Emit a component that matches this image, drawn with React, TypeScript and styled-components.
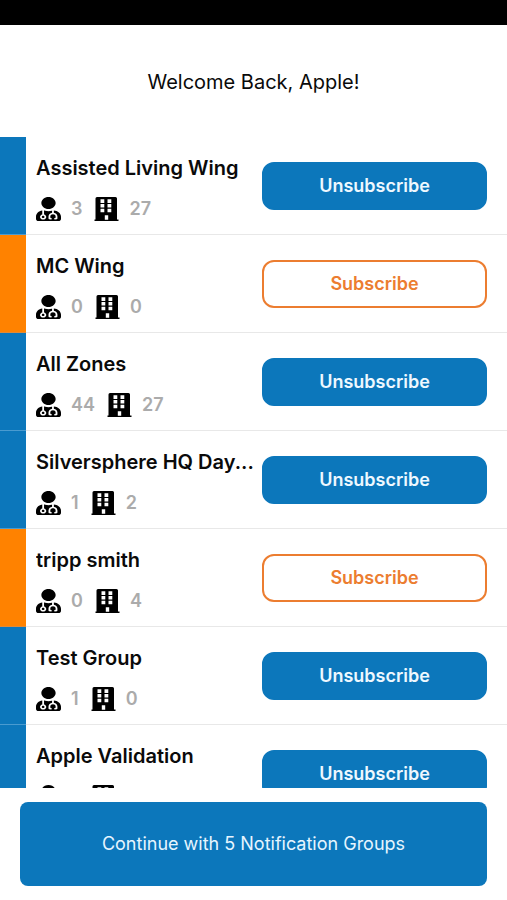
import React, { useState } from "react";
import styled, { createGlobalStyle } from "styled-components";
import { FaUserMd } from "react-icons/fa";

const BLUE = "#0c77bb";
const ORANGE = "#ff8200";
const OUTLINE = "#ec7d30";

const GlobalStyle = createGlobalStyle`
  *, *::before, *::after { box-sizing: border-box; }
  body {
    margin: 0;
    background: #fff;
    color: #0a0a0a;
    font-family: Inter, "Liberation Sans", sans-serif;
  }
  button { font: inherit; cursor: pointer; }
`;

const Screen = styled.div`
  display: flex;
  flex-direction: column;
  height: 100vh;
`;

const StatusBar = styled.div`
  flex: none;
  height: 25px;
  background: #000;
`;

const Header = styled.header`
  flex: none;
  padding: 45px 20px 43px;
  text-align: center;
`;

const Greeting = styled.h1`
  margin: 0;
  font-size: 20px;
  line-height: 24px;
  font-weight: 400;
`;

const GroupList = styled.ul`
  flex: 1;
  min-height: 0;
  margin: 0;
  padding: 0;
  list-style: none;
  overflow-y: auto;
  scrollbar-width: none;
`;

const GroupRow = styled.li`
  display: grid;
  grid-template-columns: 26px minmax(0, 1fr) minmax(0, 225px);
  align-items: center;
  height: 98px;
  padding-right: 20px;
  box-shadow: inset 0 -1px #e8e8e8;
`;

const Stripe = styled.div<{ $subscribed: boolean }>`
  align-self: stretch;
  background: ${(p) => (p.$subscribed ? BLUE : ORANGE)};
  box-shadow: inset 0 -1px ${(p) => (p.$subscribed ? "#4a9bd0" : "#e08a38")};
`;

const Details = styled.div`
  padding: 4px 4px 0 10px;
`;

const GroupName = styled.h2`
  margin: 0 0 16px;
  overflow: hidden;
  font-size: 20px;
  line-height: 26px;
  font-weight: 600;
  white-space: nowrap;
  text-overflow: ellipsis;
`;

const Counts = styled.div`
  display: flex;
  align-items: center;
  gap: 12px;
  color: #ababab;
  font-size: 18px;
  line-height: 24px;
  font-weight: 600;
`;

const Count = styled.span`
  display: flex;
  align-items: center;
  gap: 10px;

  svg {
    width: 25px;
    height: 24px;
    color: #000;
  }
`;

const SubscribeButton = styled.button<{ $subscribed: boolean }>`
  height: 48px;
  padding: 0 12px;
  border: 2px solid ${(p) => (p.$subscribed ? BLUE : OUTLINE)};
  border-radius: 12px;
  background: ${(p) => (p.$subscribed ? BLUE : "#fff")};
  color: ${(p) => (p.$subscribed ? "#eef8ff" : OUTLINE)};
  font-size: 18px;
  line-height: 24px;
  font-weight: 600;
`;

const Footer = styled.footer`
  flex: none;
  display: flex;
  padding: 14px 20px;
`;

const ContinueButton = styled.button`
  flex: 1;
  height: 84px;
  border: 0;
  border-radius: 8px;
  background: ${BLUE};
  color: #e6f5ff;
  font-size: 18px;
  line-height: 24px;
  font-weight: 400;
`;

const BuildingIcon = () => (
  <svg viewBox="0 0 25 24" fill="currentColor" aria-hidden>
    <path
      fillRule="evenodd"
      d="M3 0H21.500A1.500 1.500 0 0 1 23 1.500V22.500H24.500V24H.5V22.500H1.500V1.500A1.500 1.500 0 0 1 3 0ZM6.500 2.200V6H10.300V2.200ZM13.500 2.200V6H17.300V2.200ZM6.500 7.100V10.600H10.300V7.100ZM13.500 7.100V10.600H17.300V7.100ZM6.500 11.800V15.300H10.300V11.800ZM13.500 11.800V15.300H17.300V11.800ZM10.800 18.200V22.700H14.200V18.200Z"
    />
  </svg>
);

type Group = { name: string; staff: number; rooms: number; subscribed: boolean };

const initialGroups: Group[] = [
  { name: "Assisted Living Wing", staff: 3, rooms: 27, subscribed: true },
  { name: "MC Wing", staff: 0, rooms: 0, subscribed: false },
  { name: "All Zones", staff: 44, rooms: 27, subscribed: true },
  { name: "Silversphere HQ Day...", staff: 1, rooms: 2, subscribed: true },
  { name: "tripp smith", staff: 0, rooms: 4, subscribed: false },
  { name: "Test Group", staff: 1, rooms: 0, subscribed: true },
  { name: "Apple Validation", staff: 1, rooms: 1, subscribed: true },
];

export default function App() {
  const [groups, setGroups] = useState(initialGroups);
  const total = groups.filter((g) => g.subscribed).length;

  const toggle = (name: string) =>
    setGroups((all) =>
      all.map((g) => (g.name === name ? { ...g, subscribed: !g.subscribed } : g))
    );

  return (
    <>
      <GlobalStyle />
      <Screen>
        <StatusBar />
        <Header>
          <Greeting>Welcome Back, Apple!</Greeting>
        </Header>
        <GroupList>
          {groups.map((g) => (
            <GroupRow key={g.name}>
              <Stripe $subscribed={g.subscribed} />
              <Details>
                <GroupName>{g.name}</GroupName>
                <Counts>
                  <Count>
                    <FaUserMd preserveAspectRatio="none" aria-hidden />
                    {g.staff}
                  </Count>
                  <Count>
                    <BuildingIcon />
                    {g.rooms}
                  </Count>
                </Counts>
              </Details>
              <SubscribeButton
                type="button"
                $subscribed={g.subscribed}
                onClick={() => toggle(g.name)}
              >
                {g.subscribed ? "Unsubscribe" : "Subscribe"}
              </SubscribeButton>
            </GroupRow>
          ))}
        </GroupList>
        <Footer>
          <ContinueButton type="button">
            Continue with {total} Notification Groups
          </ContinueButton>
        </Footer>
      </Screen>
    </>
  );
}
